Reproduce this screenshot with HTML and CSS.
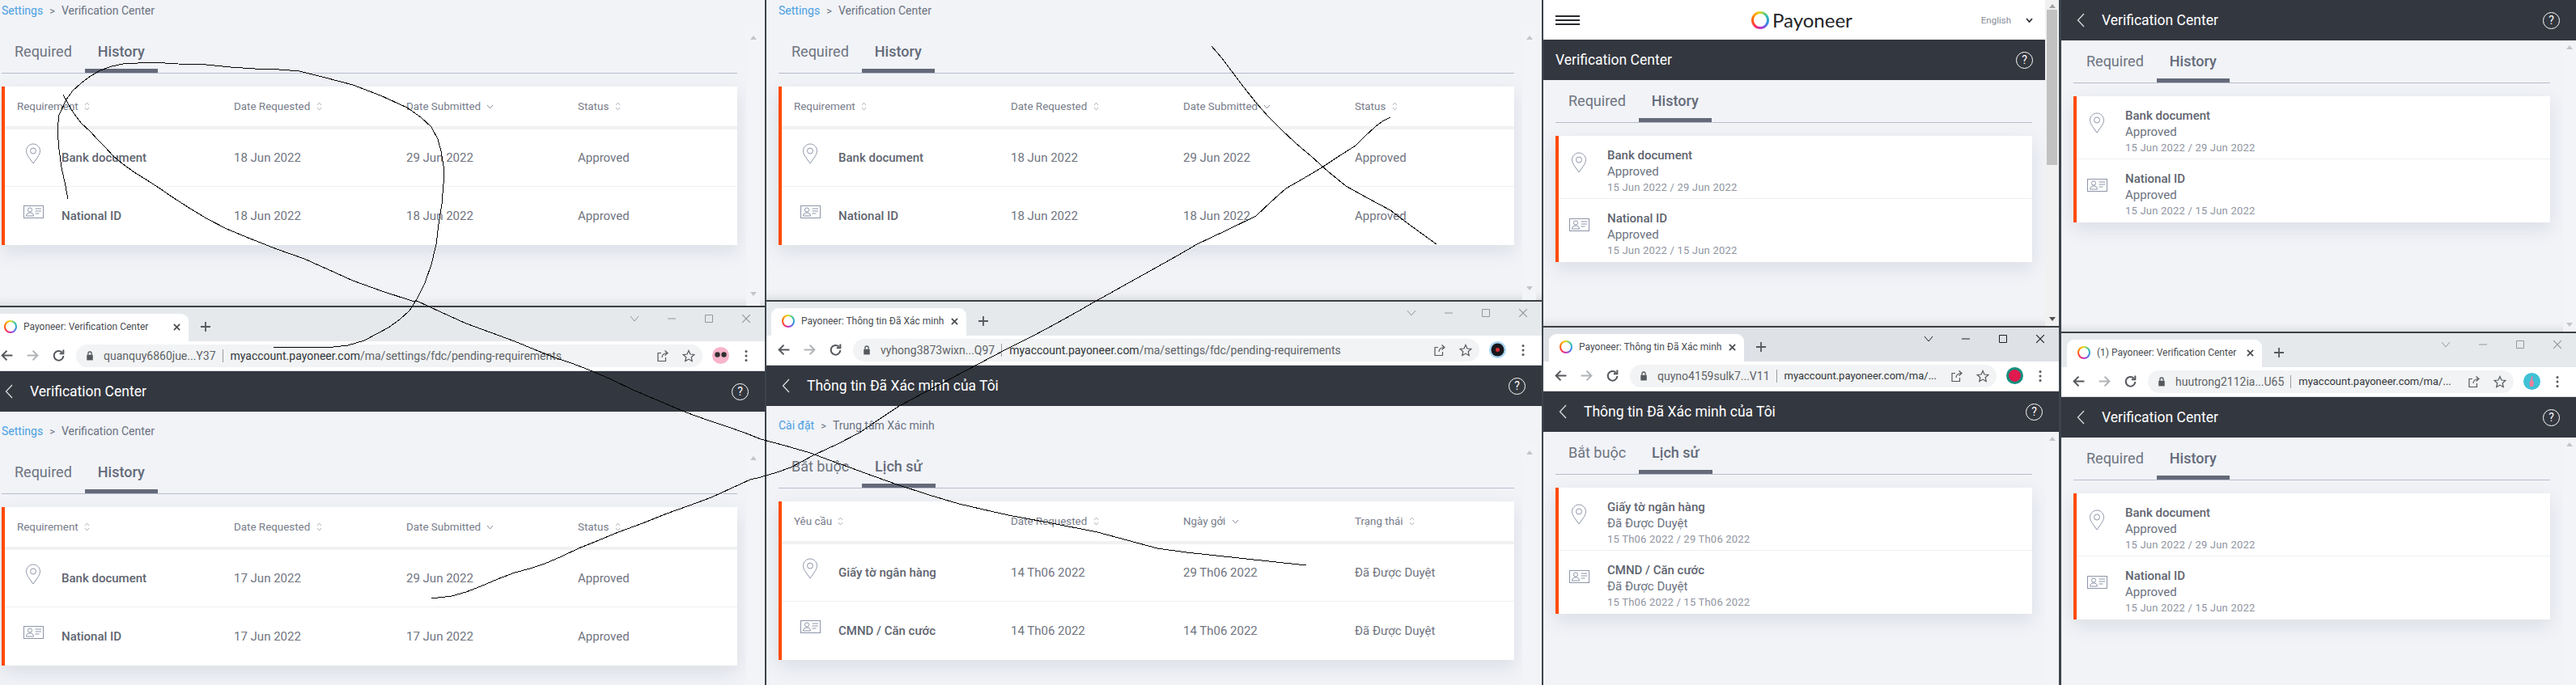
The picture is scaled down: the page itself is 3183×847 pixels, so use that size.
FILE: index.html
```html
<!DOCTYPE html>
<html lang="en">

<head>
  <meta charset="UTF-8" />
  <meta name="viewport" content="width=device-width, initial-scale=1.0" />
  <title>Payoneer Verification Center</title>
  <link rel="stylesheet" href="styles.css">
</head>

<body>
  <svg class="sprite" xmlns="http://www.w3.org/2000/svg">
    <symbol id="pin" viewBox="0 0 20 26"><path d="M10 1C5.500 1 1.500 4.800 1.500 9.500c0 3 1.500 5.500 3 7.800L10 25l5.500-7.700c1.500-2.300 3-4.800 3-7.800C18.500 4.800 14.500 1 10 1z" /><circle cx="10" cy="9.500" r="3.500" /></symbol>
    <symbol id="card" viewBox="0 0 25 16"><rect x="0.500" y="0.500" width="24" height="15" /><circle cx="8" cy="5.500" r="2.600" /><path d="M3.500 13c0-2.800 2-4 4.500-4s4.500 1.200 4.500 4zM14.500 4h7.500M14.500 7h7.500M14.500 10h5" /></symbol>
    <symbol id="sort" viewBox="0 0 7 13"><path d="M1 5l2.500-3L6 5M1 8l2.500 3L6 8" /></symbol>
    <symbol id="down" viewBox="0 0 9 6"><path d="M1 1l3.500 4L8 1" /></symbol>
    <symbol id="chev" viewBox="0 0 10 18"><path d="M9 1L1.500 9 9 17" /></symbol>
    <symbol id="arrow" viewBox="0 0 16 16"><path d="M14.500 8H2.500M8 2.500L2.500 8 8 13.500" /></symbol>
    <symbol id="reload" viewBox="0 0 16 16"><path d="M13.500 8.500a5.500 5.500 0 1 1-1.600-4.100M13.500 1.500v4.300H9.200" /></symbol>
    <symbol id="lock" viewBox="0 0 12 16"><path class="solid" d="M1.500 6.500h9v8h-9z" /><path d="M3.500 6.500V4.500a2.500 2.500 0 0 1 5 0v2" /></symbol>
    <symbol id="share" viewBox="0 0 16 16"><path d="M6 4.500H2v10h9.500V10M7 10c0-3 2.500-5.500 6-5.500M10.500 1.500L14 4.500l-3.500 3" /></symbol>
    <symbol id="star" viewBox="0 0 16 16"><path d="M8 1.500l2 4.500 4.800.5-3.600 3.200 1 4.800L8 12.100l-4.200 2.400 1-4.800L1.200 6.500 6 6z" /></symbol>
    <symbol id="dots" viewBox="0 0 4 16"><circle class="solid" cx="2" cy="2.500" r="1.500" /><circle class="solid" cx="2" cy="8" r="1.500" /><circle class="solid" cx="2" cy="13.500" r="1.500" /></symbol>
    <symbol id="cross" viewBox="0 0 10 10"><path d="M1 1l8 8M9 1L1 9" /></symbol>
    <symbol id="plus" viewBox="0 0 12 12"><path d="M6 0v12M0 6h12" /></symbol>
    <symbol id="min" viewBox="0 0 12 12"><path d="M1 6h10" /></symbol>
    <symbol id="max" viewBox="0 0 12 12"><path d="M1.500 1.500h9v9h-9z" /></symbol>
    <symbol id="vee" viewBox="0 0 12 12"><path d="M1 3l5 6 5-6" /></symbol>
  </svg>

  <div class="desk">

    <!-- first column -->
    <div class="col col-a">
      <section class="shot shot-top">
        <p class="crumbs"><a>Settings</a><span class="sep">&gt;</span>Verification Center</p>
        <div class="scroller">
          <div class="main">
            <nav class="tabs"><span class="tab">Required</span><span class="tab valgt">History</span></nav>
            <div class="panel">
              <div class="thead">
                <div class="th th-first">Requirement <svg class="ic-sort"><use href="#sort" /></svg></div>
                <div class="th">Date Requested <svg class="ic-sort"><use href="#sort" /></svg></div>
                <div class="th">Date Submitted <svg class="ic-down"><use href="#down" /></svg></div>
                <div class="th">Status <svg class="ic-sort"><use href="#sort" /></svg></div>
              </div>
              <div class="trow">
                <div class="td td-first"><svg class="ic-pin"><use href="#pin" /></svg><b>Bank document</b></div>
                <div class="td">18 Jun 2022</div>
                <div class="td">29 Jun 2022</div>
                <div class="td">Approved</div>
              </div>
              <div class="trow trow-last">
                <div class="td td-first"><svg class="ic-card"><use href="#card" /></svg><b>National ID</b></div>
                <div class="td">18 Jun 2022</div>
                <div class="td">18 Jun 2022</div>
                <div class="td">Approved</div>
              </div>
            </div>
          </div>
          <div class="sbar"><i class="up"></i><i class="dn"></i></div>
        </div>
      </section>

      <section class="shot shot-low">
        <div class="strip">
          <div class="btab">
            <span class="ring"></span><span class="btab-text">Payoneer: Verification Center</span>
            <svg class="ic-x"><use href="#cross" /></svg>
          </div>
          <svg class="ic-plus"><use href="#plus" /></svg>
          <div class="winctl">
            <span><svg><use href="#vee" /></svg></span><span><svg><use href="#min" /></svg></span><span><svg><use href="#max" /></svg></span><span><svg><use href="#cross" /></svg></span>
          </div>
        </div>
        <div class="toolbar">
          <span class="tool"><svg class="ic-nav"><use href="#arrow" /></svg></span>
          <span class="tool tool-off"><svg class="ic-nav ic-flip"><use href="#arrow" /></svg></span>
          <span class="tool"><svg class="ic-nav"><use href="#reload" /></svg></span>
          <div class="omni">
            <svg class="ic-lock"><use href="#lock" /></svg>
            <span class="acct">quanquy6860jue...Y37</span>
            <span class="url"><em>myaccount.payoneer.com</em>/ma/settings/fdc/pending-requirements</span>
            <svg class="ic-omni"><use href="#share" /></svg>
            <svg class="ic-omni"><use href="#star" /></svg>
          </div>
          <span class="tool">
            <svg class="avatar" viewBox="0 0 21 21"><circle cx="10.500" cy="10.500" r="10.500" fill="#f7b4cb" /><circle cx="6.500" cy="9.500" r="3.200" fill="#33302f" /><circle cx="14.500" cy="9.500" r="3.200" fill="#33302f" /></svg>
          </span>
          <span class="tool"><svg class="ic-dots"><use href="#dots" /></svg></span>
        </div>
        <header class="bar">
          <svg class="ic-chev"><use href="#chev" /></svg>
          <h1>Verification Center</h1>
          <span class="help">?</span>
        </header>
        <p class="crumbs"><a>Settings</a><span class="sep">&gt;</span>Verification Center</p>
        <div class="scroller">
          <div class="main">
            <nav class="tabs"><span class="tab">Required</span><span class="tab valgt">History</span></nav>
            <div class="panel">
              <div class="thead">
                <div class="th th-first">Requirement <svg class="ic-sort"><use href="#sort" /></svg></div>
                <div class="th">Date Requested <svg class="ic-sort"><use href="#sort" /></svg></div>
                <div class="th">Date Submitted <svg class="ic-down"><use href="#down" /></svg></div>
                <div class="th">Status <svg class="ic-sort"><use href="#sort" /></svg></div>
              </div>
              <div class="trow">
                <div class="td td-first"><svg class="ic-pin"><use href="#pin" /></svg><b>Bank document</b></div>
                <div class="td">17 Jun 2022</div>
                <div class="td">29 Jun 2022</div>
                <div class="td">Approved</div>
              </div>
              <div class="trow trow-last">
                <div class="td td-first"><svg class="ic-card"><use href="#card" /></svg><b>National ID</b></div>
                <div class="td">17 Jun 2022</div>
                <div class="td">17 Jun 2022</div>
                <div class="td">Approved</div>
              </div>
            </div>
          </div>
          <div class="sbar"><i class="up"></i></div>
        </div>
      </section>
    </div>

    <!-- second column -->
    <div class="col col-b">
      <section class="shot shot-top">
        <p class="crumbs"><a>Settings</a><span class="sep">&gt;</span>Verification Center</p>
        <div class="scroller">
          <div class="main">
            <nav class="tabs"><span class="tab">Required</span><span class="tab valgt">History</span></nav>
            <div class="panel">
              <div class="thead">
                <div class="th th-first">Requirement <svg class="ic-sort"><use href="#sort" /></svg></div>
                <div class="th">Date Requested <svg class="ic-sort"><use href="#sort" /></svg></div>
                <div class="th">Date Submitted <svg class="ic-down"><use href="#down" /></svg></div>
                <div class="th">Status <svg class="ic-sort"><use href="#sort" /></svg></div>
              </div>
              <div class="trow">
                <div class="td td-first"><svg class="ic-pin"><use href="#pin" /></svg><b>Bank document</b></div>
                <div class="td">18 Jun 2022</div>
                <div class="td">29 Jun 2022</div>
                <div class="td">Approved</div>
              </div>
              <div class="trow trow-last">
                <div class="td td-first"><svg class="ic-card"><use href="#card" /></svg><b>National ID</b></div>
                <div class="td">18 Jun 2022</div>
                <div class="td">18 Jun 2022</div>
                <div class="td">Approved</div>
              </div>
            </div>
          </div>
          <div class="sbar"><i class="up"></i><i class="dn"></i></div>
        </div>
      </section>

      <section class="shot shot-low">
        <div class="strip">
          <div class="btab">
            <span class="ring"></span><span class="btab-text">Payoneer: Thông tin Đã Xác minh</span>
            <svg class="ic-x"><use href="#cross" /></svg>
          </div>
          <svg class="ic-plus"><use href="#plus" /></svg>
          <div class="winctl">
            <span><svg><use href="#vee" /></svg></span><span><svg><use href="#min" /></svg></span><span><svg><use href="#max" /></svg></span><span><svg><use href="#cross" /></svg></span>
          </div>
        </div>
        <div class="toolbar">
          <span class="tool"><svg class="ic-nav"><use href="#arrow" /></svg></span>
          <span class="tool tool-off"><svg class="ic-nav ic-flip"><use href="#arrow" /></svg></span>
          <span class="tool"><svg class="ic-nav"><use href="#reload" /></svg></span>
          <div class="omni">
            <svg class="ic-lock"><use href="#lock" /></svg>
            <span class="acct">vyhong3873wixn...Q97</span>
            <span class="url"><em>myaccount.payoneer.com</em>/ma/settings/fdc/pending-requirements</span>
            <svg class="ic-omni"><use href="#share" /></svg>
            <svg class="ic-omni"><use href="#star" /></svg>
          </div>
          <span class="tool">
            <svg class="avatar" viewBox="0 0 21 21"><circle cx="10.500" cy="10.500" r="10.500" fill="#a9d6f2" /><circle cx="10.500" cy="10.500" r="8" fill="#17181c" /><circle cx="10.500" cy="10.500" r="2.500" fill="#d8323a" /></svg>
          </span>
          <span class="tool"><svg class="ic-dots"><use href="#dots" /></svg></span>
        </div>
        <header class="bar">
          <svg class="ic-chev"><use href="#chev" /></svg>
          <h1>Thông tin Đã Xác minh của Tôi</h1>
          <span class="help">?</span>
        </header>
        <p class="crumbs"><a>Cài đặt</a><span class="sep">&gt;</span>Trung tâm Xác minh</p>
        <div class="scroller">
          <div class="main">
            <nav class="tabs"><span class="tab">Bắt buộc</span><span class="tab valgt">Lịch sử</span></nav>
            <div class="panel">
              <div class="thead">
                <div class="th th-first">Yêu cầu <svg class="ic-sort"><use href="#sort" /></svg></div>
                <div class="th">Date Requested <svg class="ic-sort"><use href="#sort" /></svg></div>
                <div class="th">Ngày gởi <svg class="ic-down"><use href="#down" /></svg></div>
                <div class="th">Trạng thái <svg class="ic-sort"><use href="#sort" /></svg></div>
              </div>
              <div class="trow">
                <div class="td td-first"><svg class="ic-pin"><use href="#pin" /></svg><b>Giấy tờ ngân hàng</b></div>
                <div class="td">14 Th06 2022</div>
                <div class="td">29 Th06 2022</div>
                <div class="td">Đã Được Duyệt</div>
              </div>
              <div class="trow trow-last">
                <div class="td td-first"><svg class="ic-card"><use href="#card" /></svg><b>CMND / Căn cước</b></div>
                <div class="td">14 Th06 2022</div>
                <div class="td">14 Th06 2022</div>
                <div class="td">Đã Được Duyệt</div>
              </div>
            </div>
          </div>
          <div class="sbar"><i class="up"></i></div>
        </div>
      </section>
    </div>

    <!-- third column, phone width -->
    <div class="col col-c">
      <section class="shot shot-top shot-site">
        <div class="site">
          <div class="topnav">
            <svg class="ic-burger" viewBox="0 0 30 12"><path d="M0 1h30M0 6h30M0 11h30" /></svg>
            <div class="logo"><span class="ring ring-big"></span><span class="logo-text">Payoneer</span></div>
            <span class="lang">English</span>
            <svg class="ic-lang"><use href="#down" /></svg>
          </div>
          <header class="bar bar-plain">
            <h1>Verification Center</h1>
            <span class="help">?</span>
          </header>
          <div class="scroller">
            <div class="main">
              <nav class="tabs"><span class="tab">Required</span><span class="tab valgt">History</span></nav>
              <div class="panel">
                <div class="item">
                  <svg class="ic-pin"><use href="#pin" /></svg>
                  <div>
                    <h2>Bank document</h2>
                    <p class="status">Approved</p>
                    <p class="dates">15 Jun 2022 / 29 Jun 2022</p>
                  </div>
                </div>
                <div class="item item-last">
                  <svg class="ic-card"><use href="#card" /></svg>
                  <div>
                    <h2>National ID</h2>
                    <p class="status">Approved</p>
                    <p class="dates">15 Jun 2022 / 15 Jun 2022</p>
                  </div>
                </div>
              </div>
            </div>
          </div>
        </div>
        <div class="sbar sbar-full"><i class="up"></i><b class="thumb"></b><i class="dn"></i></div>
      </section>

      <section class="shot shot-low">
        <div class="strip">
          <div class="btab">
            <span class="ring"></span><span class="btab-text">Payoneer: Thông tin Đã Xác minh</span>
            <svg class="ic-x"><use href="#cross" /></svg>
          </div>
          <svg class="ic-plus"><use href="#plus" /></svg>
          <div class="winctl">
            <span><svg><use href="#vee" /></svg></span><span><svg><use href="#min" /></svg></span><span><svg><use href="#max" /></svg></span><span><svg><use href="#cross" /></svg></span>
          </div>
        </div>
        <div class="toolbar">
          <span class="tool"><svg class="ic-nav"><use href="#arrow" /></svg></span>
          <span class="tool tool-off"><svg class="ic-nav ic-flip"><use href="#arrow" /></svg></span>
          <span class="tool"><svg class="ic-nav"><use href="#reload" /></svg></span>
          <div class="omni">
            <svg class="ic-lock"><use href="#lock" /></svg>
            <span class="acct">quyno4159sulk7...V11</span>
            <span class="url url-short"><em>myaccount.payoneer.com/ma/...</em></span>
            <svg class="ic-omni"><use href="#share" /></svg>
            <svg class="ic-omni"><use href="#star" /></svg>
          </div>
          <span class="tool">
            <svg class="avatar" viewBox="0 0 21 21"><circle cx="10.500" cy="10.500" r="10.500" fill="#12907e" /><circle cx="10.500" cy="10.500" r="7.500" fill="#e0194f" /></svg>
          </span>
          <span class="tool"><svg class="ic-dots"><use href="#dots" /></svg></span>
        </div>
        <header class="bar">
          <svg class="ic-chev"><use href="#chev" /></svg>
          <h1>Thông tin Đã Xác minh của Tôi</h1>
          <span class="help">?</span>
        </header>
        <div class="scroller">
          <div class="main">
            <nav class="tabs"><span class="tab">Bắt buộc</span><span class="tab valgt">Lịch sử</span></nav>
            <div class="panel">
              <div class="item">
                <svg class="ic-pin"><use href="#pin" /></svg>
                <div>
                  <h2>Giấy tờ ngân hàng</h2>
                  <p class="status">Đã Được Duyệt</p>
                  <p class="dates">15 Th06 2022 / 29 Th06 2022</p>
                </div>
              </div>
              <div class="item item-last">
                <svg class="ic-card"><use href="#card" /></svg>
                <div>
                  <h2>CMND / Căn cước</h2>
                  <p class="status">Đã Được Duyệt</p>
                  <p class="dates">15 Th06 2022 / 15 Th06 2022</p>
                </div>
              </div>
            </div>
          </div>
          <div class="sbar"><i class="up"></i></div>
        </div>
      </section>
    </div>

    <!-- fourth column, phone width -->
    <div class="col col-d">
      <section class="shot shot-top">
        <header class="bar">
          <svg class="ic-chev"><use href="#chev" /></svg>
          <h1>Verification Center</h1>
          <span class="help">?</span>
        </header>
        <div class="scroller">
          <div class="main">
            <nav class="tabs"><span class="tab">Required</span><span class="tab valgt">History</span></nav>
            <div class="panel">
              <div class="item">
                <svg class="ic-pin"><use href="#pin" /></svg>
                <div>
                  <h2>Bank document</h2>
                  <p class="status">Approved</p>
                  <p class="dates">15 Jun 2022 / 29 Jun 2022</p>
                </div>
              </div>
              <div class="item item-last">
                <svg class="ic-card"><use href="#card" /></svg>
                <div>
                  <h2>National ID</h2>
                  <p class="status">Approved</p>
                  <p class="dates">15 Jun 2022 / 15 Jun 2022</p>
                </div>
              </div>
            </div>
          </div>
          <div class="sbar"><i class="up"></i><i class="dn"></i></div>
        </div>
      </section>

      <section class="shot shot-low">
        <div class="strip">
          <div class="btab">
            <span class="ring"></span><span class="btab-text">(1) Payoneer: Verification Center</span>
            <svg class="ic-x"><use href="#cross" /></svg>
          </div>
          <svg class="ic-plus"><use href="#plus" /></svg>
          <div class="winctl">
            <span><svg><use href="#vee" /></svg></span><span><svg><use href="#min" /></svg></span><span><svg><use href="#max" /></svg></span><span><svg><use href="#cross" /></svg></span>
          </div>
        </div>
        <div class="toolbar">
          <span class="tool"><svg class="ic-nav"><use href="#arrow" /></svg></span>
          <span class="tool tool-off"><svg class="ic-nav ic-flip"><use href="#arrow" /></svg></span>
          <span class="tool"><svg class="ic-nav"><use href="#reload" /></svg></span>
          <div class="omni">
            <svg class="ic-lock"><use href="#lock" /></svg>
            <span class="acct">huutrong2112ia...U65</span>
            <span class="url url-short"><em>myaccount.payoneer.com/ma/...</em></span>
            <svg class="ic-omni"><use href="#share" /></svg>
            <svg class="ic-omni"><use href="#star" /></svg>
          </div>
          <span class="tool">
            <svg class="avatar" viewBox="0 0 21 21"><circle cx="10.500" cy="10.500" r="10.500" fill="#3fc1d6" /><path d="M10 4l2 1-1 3 2 4-1 5H8l-.5-5L9.500 8z" fill="#ee7f9a" /></svg>
          </span>
          <span class="tool"><svg class="ic-dots"><use href="#dots" /></svg></span>
        </div>
        <header class="bar">
          <svg class="ic-chev"><use href="#chev" /></svg>
          <h1>Verification Center</h1>
          <span class="help">?</span>
        </header>
        <div class="scroller">
          <div class="main">
            <nav class="tabs"><span class="tab">Required</span><span class="tab valgt">History</span></nav>
            <div class="panel">
              <div class="item">
                <svg class="ic-pin"><use href="#pin" /></svg>
                <div>
                  <h2>Bank document</h2>
                  <p class="status">Approved</p>
                  <p class="dates">15 Jun 2022 / 29 Jun 2022</p>
                </div>
              </div>
              <div class="item item-last">
                <svg class="ic-card"><use href="#card" /></svg>
                <div>
                  <h2>National ID</h2>
                  <p class="status">Approved</p>
                  <p class="dates">15 Jun 2022 / 15 Jun 2022</p>
                </div>
              </div>
            </div>
          </div>
          <div class="sbar"><i class="up"></i></div>
        </div>
      </section>
    </div>

    <!-- pen strokes drawn over the screenshots -->
    <svg class="pen" viewBox="0 0 3183 847">
      <polyline points="84,246 80,225 76,207 73,185 71,160 73,142 82,123 90,112 100,103 112,94 124,87 138,82 152,79 170,78 188,77 220,79 255,80 285,83 315,85 345,86 370,88 402,96 436,105 470,118 503,133 520,145 533,157 541,172 545,187 548,205 548,227 546,252 542,277 539,302 533,327 525,350 515,370 506,384 494,395 480,405 467,412 450,421 430,427 412,429 338,429" />
      <polyline points="78,117 84,128 91,140 100,152 112,163 120,172 130,182 140,193 152,203 166,213 182,223 196,232 212,243 232,256 255,270 280,283 309,295 342,308 376,320 405,333 436,347 472,360 509,372 515,372 545,386 576,400 606,411 636,422 660,432 685,442 706,449 727,457 755,469 782,482 815,496 848,510 873,519 897,527 920,535 940,543 970,551 1001,560 1025,569 1050,578 1080,589 1111,600 1148,612 1185,623 1215,630 1246,637 1300,647 1356,658 1393,668 1430,678 1466,683 1503,687 1540,691 1577,695 1614,699" />
      <polyline points="533,740 558,737 576,732 594,725 615,716 636,708 655,703 673,697 694,688 715,678 740,668 764,658 794,647 824,635 852,625 879,615 903,604 927,593 940,590 960,584 977,578 992,570 1007,562 1035,549 1062,535 1087,518 1111,502 1160,476 1209,450 1243,432 1277,415 1305,400 1332,385 1344,378 1387,354 1430,330 1455,316 1479,302 1515,285 1552,267 1570,250 1589,233 1610,221 1632,208 1653,194 1675,180 1687,168 1699,157 1708,150 1718,145" />
      <polyline points="1497,57 1510,72 1522,88 1537,108 1552,127 1567,144 1583,160 1601,177 1620,193 1641,212 1663,230 1690,245 1718,260 1746,281 1775,302" />
    </svg>
  </div>
</body>

</html>
```

FILE: styles.css
```css
* {
  box-sizing: border-box;
}

body {
  margin: 0;
  font-family: Roboto, "Liberation Sans", sans-serif;
  color: #6b7180;
  background-color: #f1f3f7;
}

h1, h2, p {
  margin: 0;
  font-weight: normal;
}

svg {
  fill: none;
  stroke: currentColor;
}

.sprite {
  position: absolute;
  width: 0;
  height: 0;
}

.solid {
  fill: currentColor;
  stroke: none;
}

.desk {
  position: relative;
  display: flex;
  width: 3183px;
  height: 847px;
  overflow: hidden;
}

.col {
  display: flex;
  flex-direction: column;
  height: 847px;
}

.col-a { width: 945px; }
.col-b { width: 960px; }
.col-c { width: 640px; }
.col-d { width: 638px; }

.col-a .shot-top { height: 378px; }
.col-b .shot-top { height: 371px; }
.col-c .shot-top { height: 403px; }
.col-d .shot-top { height: 410px; }

.shot {
  display: flex;
  flex-direction: column;
  min-height: 0;
  overflow: hidden;
  background-color: #f1f3f7;
  border-left: 2px solid #3c444c;
}

.col-a .shot {
  border-left: 0;
}

.col-c .shot {
  border-right: 1px solid #3c444c;
}

.shot-top {
  box-shadow: inset 0 -14px 12px -12px rgba(0, 0, 0, 0.12);
}

.shot-low {
  flex: 1;
  border-top: 2px solid #3d4043;
}

/* browser chrome */

.strip {
  display: flex;
  flex: none;
  height: 42px;
  padding: 8px 0 0 6px;
  background-color: #e6e9ec;
}

.col-a .strip { padding-left: 0; }
.col-a .btab { margin-left: -8px; }
.col-c .strip { padding-left: 7px; background-color: #dee1e6; }
.col-d .strip { padding-left: 7px; }

.btab {
  display: flex;
  flex: none;
  align-items: center;
  width: 241px;
  height: 34px;
  padding: 0 10px 2px 13px;
  background-color: #fff;
  border-radius: 9px 9px 0 0;
  font-size: 12px;
  color: #4a4d52;
}

.btab-text {
  flex: 1;
  margin-left: 8px;
  overflow: hidden;
  white-space: nowrap;
}

.ring {
  position: relative;
  display: block;
  flex: none;
  width: 16px;
  height: 16px;
  border-radius: 50%;
  background: conic-gradient(#d5d92b 0deg, #35c4a0 50deg, #2f8fe6 110deg, #b23ad6 170deg, #ff2a55 220deg, #ff6a00 280deg, #ffb400 330deg, #d5d92b 360deg);
}

.ring::after {
  content: "";
  position: absolute;
  inset: 2px;
  border-radius: 50%;
  background-color: #fff;
}

.ring-big {
  width: 22px;
  height: 22px;
}

.ring-big::after {
  inset: 3px;
}

.ic-x {
  flex: none;
  width: 9px;
  height: 9px;
  margin-left: 6px;
  stroke-width: 1.800;
  color: #45484c;
}

.ic-plus {
  flex: none;
  width: 12px;
  height: 12px;
  margin: 10px 0 0 15px;
  stroke-width: 1.800;
  color: #55585c;
}

.winctl {
  display: flex;
  margin: -8px 0 0 auto;
}

.winctl span {
  display: flex;
  justify-content: center;
  width: 46px;
  padding-top: 8px;
  color: #94979a;
}

.col-c .winctl span {
  color: #202124;
}

.winctl svg {
  width: 12px;
  height: 12px;
}

.toolbar {
  display: flex;
  flex: none;
  align-items: center;
  height: 37px;
  padding: 0 7px 1px 5px;
  background-color: #fff;
  border-bottom: 1px solid #dadce0;
}

.col-a .toolbar {
  margin-left: -8px;
  padding-left: 0;
}

.tool {
  display: flex;
  flex: none;
  align-items: center;
  justify-content: center;
  width: 32px;
  height: 32px;
  color: #55585c;
}

.tool-off {
  color: #b0b3b7;
}

.ic-nav {
  width: 17px;
  height: 17px;
  stroke-width: 1.900;
}

.ic-flip {
  transform: scaleX(-1);
}

.omni {
  display: flex;
  flex: 1;
  align-items: center;
  min-width: 0;
  height: 28px;
  margin: 0 6px;
  padding: 0 9px 0 12px;
  background-color: #f1f3f4;
  border-radius: 14px;
  font-size: 14px;
  white-space: nowrap;
  color: #5f6368;
}

.ic-lock {
  flex: none;
  width: 10px;
  height: 14px;
  stroke-width: 1.600;
  color: #55585c;
}

.acct {
  flex: none;
  margin-left: 12px;
  padding-right: 8px;
  border-right: 1px solid #9a9da1;
}

.url {
  flex: 1;
  min-width: 0;
  margin-left: 9px;
  overflow: hidden;
}

.url-short {
  font-size: 13px;
}

.url em {
  font-style: normal;
  color: #33363a;
}

.ic-omni {
  flex: none;
  width: 16px;
  height: 16px;
  margin-left: 16px;
  stroke-width: 1.200;
  color: #55585c;
}

.avatar {
  width: 21px;
  height: 21px;
  stroke: none;
}

.ic-dots {
  width: 4px;
  height: 16px;
  color: #55585c;
}

/* site */

.bar {
  display: flex;
  flex: none;
  align-items: center;
  height: 50px;
  padding: 0 20px 0 19px;
  background-color: #33373f;
  color: #fff;
}

.col-a .bar {
  padding-left: 6px;
}

.bar-plain {
  padding-left: 15px;
  padding-right: 15px;
}

.bar h1 {
  flex: 1;
  font-size: 17.500px;
  font-weight: 400;
}

.ic-chev {
  flex: none;
  width: 10px;
  height: 18px;
  margin-right: 21px;
  stroke-width: 1.300;
  color: #d9dade;
}

.help {
  flex: none;
  width: 21px;
  height: 21px;
  border: 1px solid #fff;
  border-radius: 50%;
  font-size: 14px;
  line-height: 19px;
  text-align: center;
}

.crumbs {
  flex: none;
  height: 26px;
  padding-left: 15px;
  font-size: 14px;
  line-height: 26px;
  color: #6b7180;
}

.col-a .crumbs {
  padding-left: 2px;
}

.shot-low .crumbs {
  margin-top: 11px;
  height: 26px;
}

.crumbs a {
  color: #4a9fe2;
}

.sep {
  margin: 0 8px;
  font-size: 13px;
}

.scroller {
  display: flex;
  flex: 1;
  min-height: 0;
  margin-top: 12px;
}

.bar + .scroller,
.bar-plain + .scroller {
  margin-top: 0;
}

.main {
  flex: 1;
  min-width: 0;
  padding: 13px 10px 0 15px;
}

.col-a .main {
  padding: 13px 11px 0 2px;
}

.col-c .main,
.col-d .main {
  padding-right: 16px;
}

.tabs {
  display: flex;
  height: 40px;
  border-bottom: 1px solid #b8bccd;
}

.tab {
  height: 39px;
  padding: 0 16px;
  font-size: 18px;
  line-height: 26px;
  color: #6f7480;
}

.valgt {
  border-bottom: 5px solid #646a79;
  font-weight: 500;
  color: #646a79;
}

.panel {
  margin-top: 16px;
  background-color: #fff;
  border-left: 4px solid #ff4a00;
  box-shadow: 0 8px 22px rgba(70, 80, 110, 0.13);
}

/* table version */

.thead,
.trow {
  display: grid;
  grid-template-columns: 283px 213px 212px 1fr;
  align-items: center;
}

.thead {
  height: 53px;
  border-bottom: 4px solid #f0f1f3;
}

.trow {
  height: 71px;
  border-bottom: 1px solid #eef0f2;
}

.trow-last {
  height: 72px;
  border-bottom: 0;
}

.th {
  display: flex;
  align-items: center;
  font-size: 13.400px;
  color: #777c8a;
  white-space: pre;
}

.th-first,
.td-first {
  padding-left: 15px;
}

.td {
  display: flex;
  align-items: center;
  font-size: 15px;
  color: #70747f;
}

.td b,
.item h2 {
  font-weight: 500;
  font-size: 15px;
  color: #60646f;
}

.ic-sort {
  width: 7px;
  height: 13px;
  margin-left: 4px;
  stroke-width: 0.800;
  color: #9da1ad;
}

.ic-down {
  width: 9px;
  height: 6px;
  margin-left: 4px;
  stroke-width: 1;
  color: #858a98;
}

.ic-pin {
  flex: none;
  width: 20px;
  height: 26px;
  margin: 0 25px 10px 10px;
  stroke-width: 1;
  color: #8d95a8;
}

.ic-card {
  flex: none;
  width: 25px;
  height: 16px;
  margin: 0 22px 10px 8px;
  stroke-width: 1;
  color: #8d95a8;
}

/* list version */

.item {
  display: flex;
  height: 78px;
  padding-top: 14px;
  border-bottom: 1px solid #eef0f2;
}

.item-last {
  border-bottom: 0;
}

.item .ic-pin {
  margin: 6px 25px 0 15px;
}

.item .ic-card {
  margin: 10px 22px 0 13px;
}

.item h2 {
  line-height: 20px;
}

.status {
  font-size: 15px;
  line-height: 20px;
}

.dates {
  font-size: 13px;
  line-height: 19px;
  letter-spacing: 0.200px;
  color: #8f94a1;
}

/* scrollbars */

.sbar {
  display: flex;
  flex: none;
  flex-direction: column;
  align-items: center;
  justify-content: space-between;
  width: 17px;
  margin-right: 7px;
  padding: 6px 0 12px;
  background-color: #f3f4f7;
}

.col-a .sbar { margin-right: 6px; }
.col-c .sbar { margin-right: 0; }
.col-d .sbar { width: 16px; margin-right: 0; padding-bottom: 6px; }

.up {
  width: 0;
  height: 0;
  border: 4px solid transparent;
  border-top: 0;
  border-bottom: 5px solid #c3c5c9;
}

.dn {
  width: 0;
  height: 0;
  border: 4px solid transparent;
  border-bottom: 0;
  border-top: 5px solid #c3c5c9;
}

.shot-site {
  flex-direction: row;
}

.site {
  display: flex;
  flex: 1;
  flex-direction: column;
  min-width: 0;
}

.site .main {
  padding-right: 16px;
}

.sbar-full {
  justify-content: flex-start;
  margin: 0;
  padding: 5px 0 6px;
  background-color: #f1f1f1;
}

.sbar-full .up {
  border-bottom-color: #a3a3a3;
}

.sbar-full .dn {
  margin-top: auto;
  border-top-color: #505050;
}

.thumb {
  flex: none;
  width: 13px;
  height: 192px;
  margin-top: 2px;
  background-color: #c1c1c1;
}

.topnav {
  display: flex;
  flex: none;
  align-items: center;
  height: 49px;
  padding: 0 15px;
  background-color: #fff;
}

.ic-burger {
  flex: none;
  width: 30px;
  height: 12px;
  stroke-width: 2;
  color: #26282c;
}

.logo {
  display: flex;
  align-items: center;
  margin-left: 212px;
}

.logo-text {
  margin-left: 4px;
  font-family: Lato, Roboto, sans-serif;
  font-size: 24px;
  color: #222428;
}

.lang {
  margin-left: auto;
  font-size: 11.500px;
  color: #878c98;
}

.ic-lang {
  flex: none;
  width: 9px;
  height: 6px;
  margin-left: 18px;
  stroke-width: 1.800;
  color: #2c2e33;
}

/* pen strokes */

.pen {
  position: absolute;
  top: 0;
  left: 0;
  width: 3183px;
  height: 847px;
  stroke: #000;
  stroke-width: 1;
  shape-rendering: crispEdges;
  pointer-events: none;
}
```
